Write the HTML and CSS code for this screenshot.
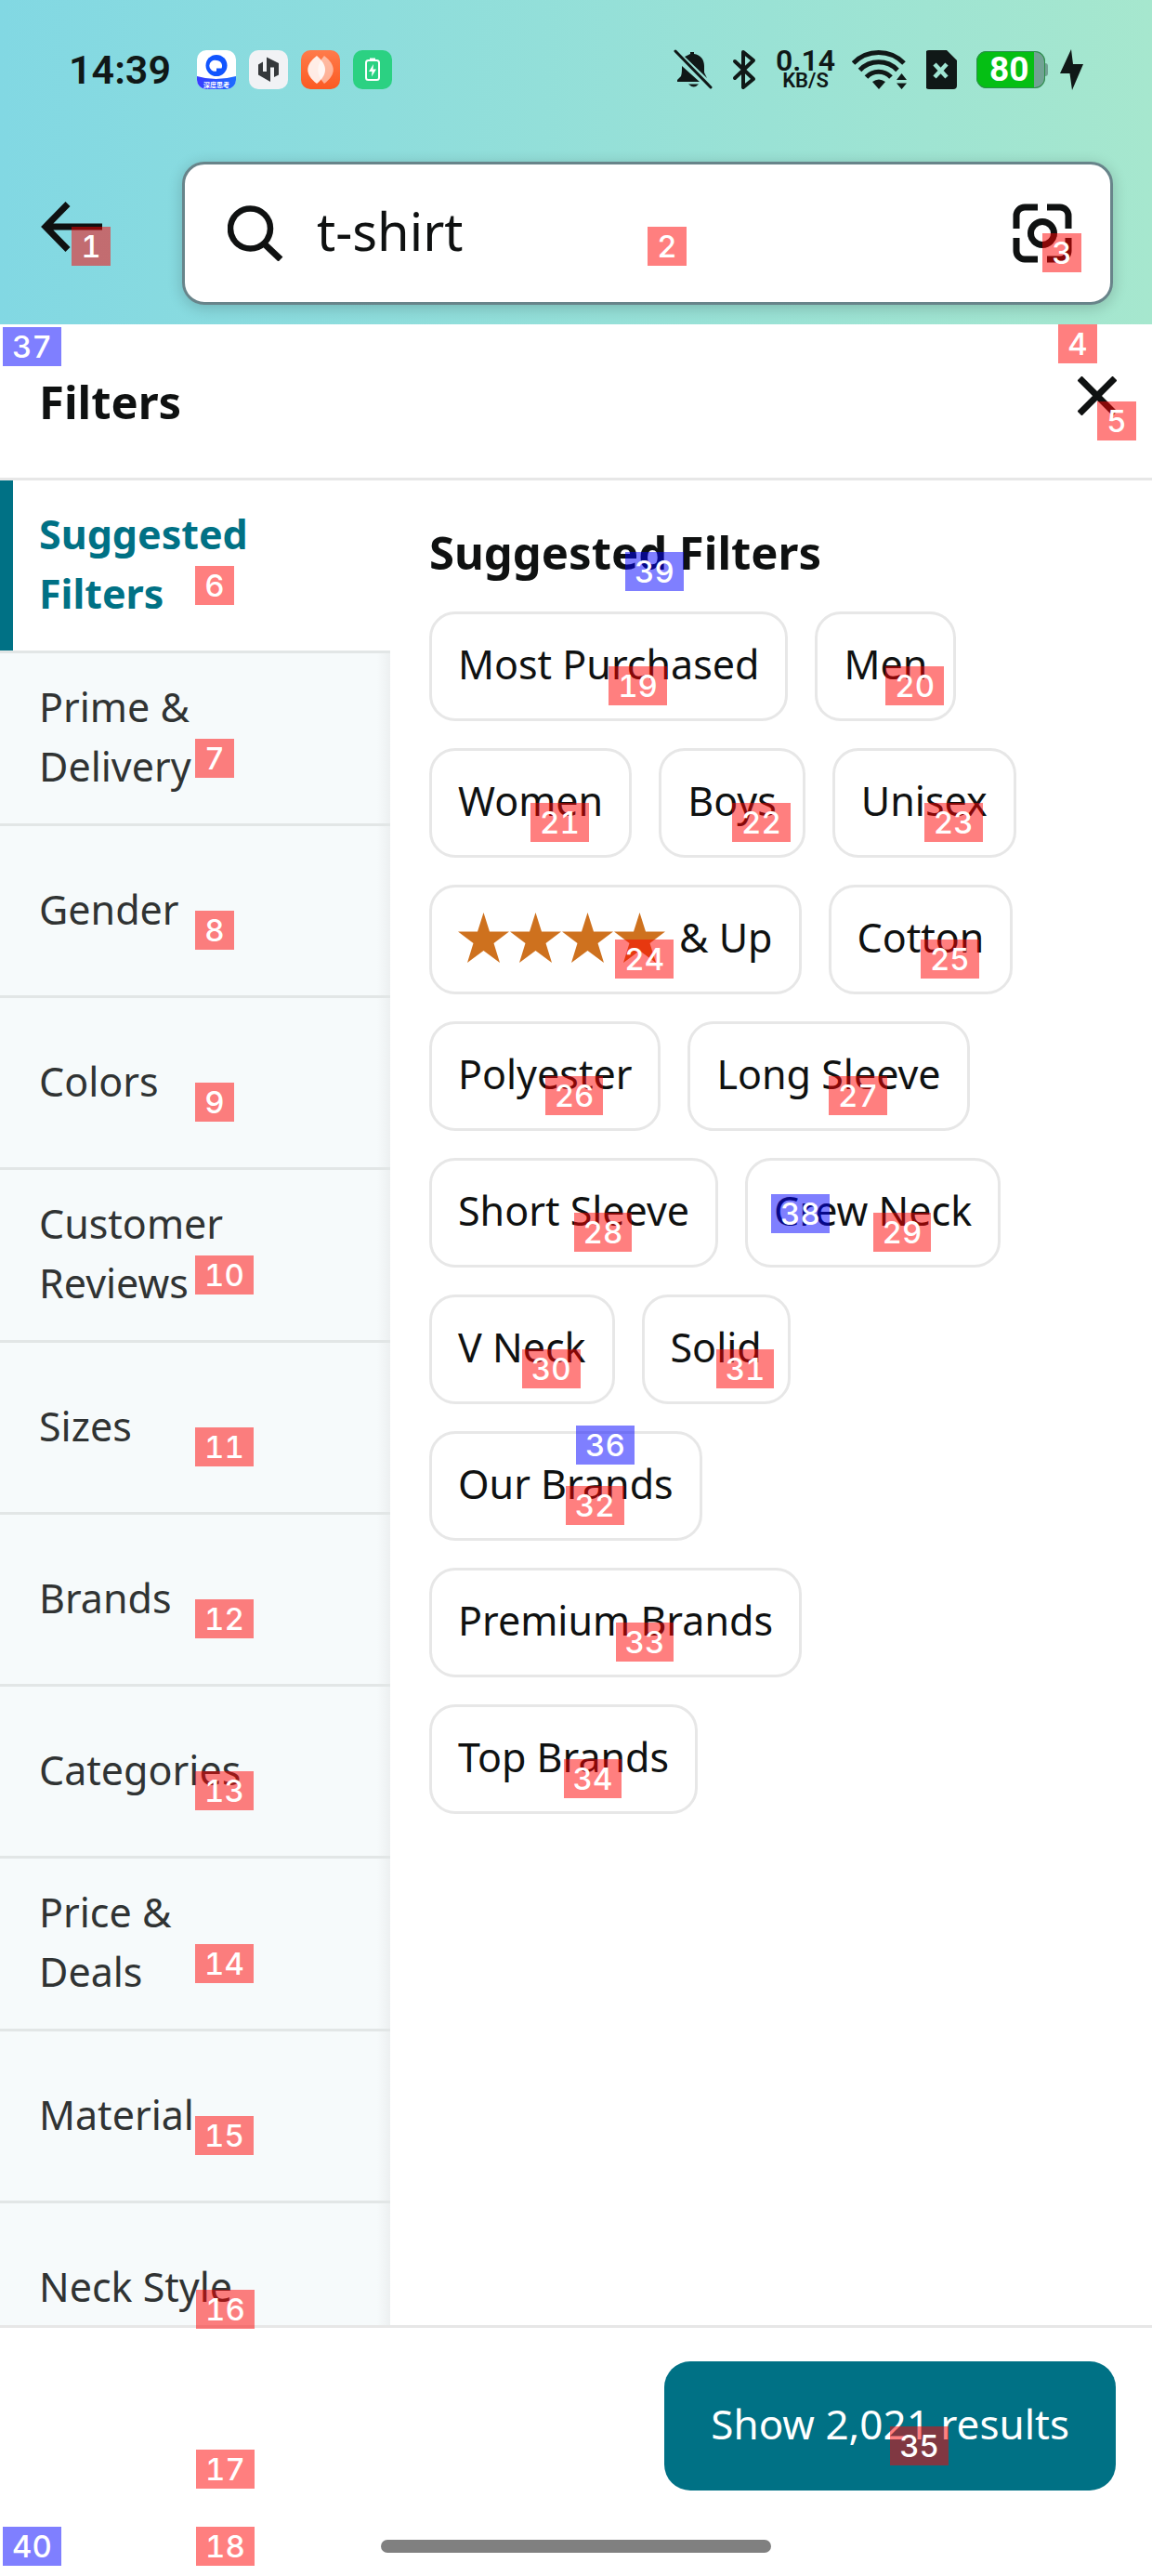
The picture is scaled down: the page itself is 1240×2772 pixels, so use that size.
FILE: index.html
```html
<!DOCTYPE html>
<html lang="en">
<head>
<meta charset="utf-8">
<meta name="viewport" content="width=device-width, initial-scale=1">
<title>Filters</title>
<link rel="stylesheet" href="styles.css">
</head>
<body>
<div class="app">
  <header class="top">
    <div class="status">
      <div class="status-left">
        <span class="time">14:39</span>
        <svg class="app-icon" viewBox="0 0 42 42" aria-hidden="true">
          <defs>
            <linearGradient id="band" x1="0" x2="1"><stop offset="0" stop-color="#3a3cff"/><stop offset="1" stop-color="#1d6dff"/></linearGradient>
            <clipPath id="tile"><rect width="42" height="42" rx="10"/></clipPath>
          </defs>
          <g clip-path="url(#tile)">
            <rect width="42" height="42" fill="#fff"/>
            <path d="M0 28Q20 34 42 28V42H0Z" fill="url(#band)"/>
            <circle cx="21" cy="16.500" r="11.500" fill="#1155ff"/>
            <path d="M21 11a6 6 0 1 0 0 11.500V19.500h5.500A6 6 0 0 0 21 11Z" fill="#fff"/>
            <text class="tile-text" x="21" y="40" text-anchor="middle">深度思考</text>
          </g>
        </svg>
        <svg class="app-icon" viewBox="0 0 42 42" aria-hidden="true">
          <rect width="42" height="42" rx="10" fill="#f1f2f5"/>
          <path d="M10 15.500 15 12.500V23h4V18.500h4V34L10 26.500Z" fill="#35383b"/>
          <path d="M19 7.500 32 14V26.500l-5 2.500V18.500h-4V22.500h-4Z" fill="#35383b"/>
        </svg>
        <svg class="app-icon" viewBox="0 0 42 42" aria-hidden="true">
          <defs><linearGradient id="orange" x2="0" y2="1"><stop offset="0" stop-color="#ff7b4b"/><stop offset="1" stop-color="#fb5a22"/></linearGradient></defs>
          <rect width="42" height="42" rx="10" fill="url(#orange)"/>
          <path d="M25 6C38 16 38 26 25 36C16 26 16 16 25 6Z" fill="#fff" opacity=".5"/>
          <path d="M17 6C4 16 4 26 17 36C29 26 29 16 17 6Z" fill="#fff" opacity=".88"/>
        </svg>
        <svg class="app-icon" viewBox="0 0 42 42" aria-hidden="true">
          <rect width="42" height="42" rx="10" fill="#2bd182"/>
          <rect x="14" y="11" width="14" height="21" rx="2.500" fill="none" stroke="#fff" stroke-width="2"/>
          <path d="M18 8.500h6V11h-6Z" fill="#fff"/>
          <path d="M22 15 17 23h3.500L20 28.500l5-8h-3.500Z" fill="#fff"/>
        </svg>
      </div>
      <div class="status-right">
        <svg width="42" height="44" viewBox="0 0 42 44" aria-hidden="true">
          <path d="M9 18 28 35H4v-2l4-4c1-3 1-7 1-11ZM12 8l6-3V3h4v2c7 1 11 6 11 13v7l3 6Z" fill="#101817"/>
          <path d="M2 2 40 41" stroke="#101817" stroke-width="3" stroke-linecap="round"/>
          <path d="M16 37.500h11q-5 6-11 0Z" fill="#101817"/>
        </svg>
        <svg width="30" height="44" viewBox="0 0 30 44" aria-hidden="true">
          <path d="M4 13 24 32 13 41V3L24 12 4 31" fill="none" stroke="#101817" stroke-width="4" stroke-linejoin="round" stroke-linecap="round"/>
        </svg>
        <span class="net"><span class="net-rate">0.14</span><span class="net-unit">KB/S</span></span>
        <svg width="60" height="44" viewBox="0 0 60 44" aria-hidden="true">
          <g fill="none" stroke="#101817" stroke-width="5">
            <path d="M1.500 15A38 38 0 0 1 56 15"/>
            <path d="M8.500 22.500A28 28 0 0 1 49 22.500"/>
            <path d="M15.500 30A18 18 0 0 1 42 30"/>
          </g>
          <path d="M22 35q7-5 14 0l-7 8Z" fill="#101817"/>
          <path d="M48 33l5.500-7 5.500 7ZM48 36.500h11L53.500 43Z" fill="#101817"/>
        </svg>
        <svg width="34" height="44" viewBox="0 0 34 44" aria-hidden="true">
          <path d="M3 1H22L33 12V39a4 4 0 0 1-4 4H3a4 4 0 0 1-4-4V5a4 4 0 0 1 4-4Z" fill="#101817"/>
          <path d="m9 16 13 14M22 16 9 30" stroke="#a0e5d3" stroke-width="4.500"/>
        </svg>
        <span class="power">
          <span class="battery"><span class="battery-level">80</span></span>
          <svg width="25" height="44" viewBox="0 0 25 44" aria-hidden="true">
            <path d="M12 0 0 26H10.500L13 44 25 16H14Z" fill="#101817"/>
          </svg>
        </span>
      </div>
    </div>
    <div class="search-row">
      <button class="back" type="button" aria-label="Back">
        <svg width="66" height="54" viewBox="0 0 66 54" aria-hidden="true"><path d="M66 27H5M29 2.500 5 27 29 51.500" fill="none" stroke="#0f1111" stroke-width="7"/></svg>
        <span class="mark">1</span>
      </button>
      <div class="search">
        <label class="search-label" for="q" aria-label="Search">
          <svg width="60" height="60" viewBox="0 0 60 60" aria-hidden="true"><circle cx="24.500" cy="25" r="21.500" fill="none" stroke="#0f1111" stroke-width="6.500"/><path d="M39 41 57 58" stroke="#0f1111" stroke-width="7"/></svg>
        </label>
        <input class="search-input" id="q" type="text" value="t-shirt">
        <button class="camera" type="button" aria-label="Search by image">
          <svg width="64" height="64" viewBox="0 0 64 64" aria-hidden="true">
            <g fill="none" stroke="#0f1111" stroke-width="7">
              <path d="M4 27V13a9 9 0 0 1 9-9H27M37 4H51a9 9 0 0 1 9 9V27M60 37V51a9 9 0 0 1-9 9H37M27 60H13a9 9 0 0 1-9-9V37"/>
              <circle cx="32" cy="32" r="12.500"/>
            </g>
          </svg>
          <span class="mark">3</span>
        </button>
        <span class="mark mark-field">2</span>
      </div>
    </div>
  </header>

  <main class="sheet">
    <span class="mark mark-blue mark-corner">37</span>
    <span class="mark mark-blue">36</span>
    <div class="sheet-head">
      <h1 class="title">Filters</h1>
      <button class="close" type="button" aria-label="Close">
        <svg width="42" height="42" viewBox="0 0 42 42" aria-hidden="true"><path d="M2 2 40 40M40 2 2 40" stroke="#0f1111" stroke-width="7"/></svg>
        <span class="mark mark-start">4</span>
        <span class="mark">5</span>
      </button>
    </div>

    <div class="columns">
      <nav class="groups" aria-label="Filter groups">
        <button class="group group-on" type="button">Suggested Filters<span class="mark">6</span></button>
        <button class="group" type="button">Prime &amp; Delivery<span class="mark">7</span></button>
        <button class="group" type="button">Gender<span class="mark">8</span></button>
        <button class="group" type="button">Colors<span class="mark">9</span></button>
        <button class="group" type="button">Customer Reviews<span class="mark">10</span></button>
        <button class="group" type="button">Sizes<span class="mark">11</span></button>
        <button class="group" type="button">Brands<span class="mark">12</span></button>
        <button class="group" type="button">Categories<span class="mark">13</span></button>
        <button class="group" type="button">Price &amp; Deals<span class="mark">14</span></button>
        <button class="group" type="button">Material<span class="mark">15</span></button>
        <button class="group" type="button">Neck Style</button>
      </nav>
      <section class="panel">
        <span class="mark mark-blue">38</span>
        <h2 class="subtitle">Suggested Filters<span class="mark mark-blue">39</span></h2>
        <div class="chips">
          <button class="chip" type="button">Most Purchased<span class="mark">19</span></button>
          <button class="chip" type="button">Men<span class="mark">20</span></button>
          <button class="chip" type="button">Women<span class="mark">21</span></button>
          <button class="chip" type="button">Boys<span class="mark">22</span></button>
          <button class="chip" type="button">Unisex<span class="mark">23</span></button>
          <button class="chip chip-stars" type="button" aria-label="4 stars and up">
            <svg width="224" height="54" viewBox="0 0 224 54" aria-hidden="true">
              <defs><path id="star" d="M27.500 0 34 20.500H55L38.500 33 45 54 27.500 41 10 54 16.500 33 0 20.500H21Z"/></defs>
              <g fill="#ce711e"><use href="#star"/><use href="#star" x="56"/><use href="#star" x="112"/><use href="#star" x="168"/></g>
            </svg>
            <span>&amp; Up</span>
            <span class="mark">24</span>
          </button>
          <button class="chip" type="button">Cotton<span class="mark">25</span></button>
          <button class="chip" type="button">Polyester<span class="mark">26</span></button>
          <button class="chip" type="button">Long Sleeve<span class="mark">27</span></button>
          <button class="chip" type="button">Short Sleeve<span class="mark">28</span></button>
          <button class="chip" type="button">Crew Neck<span class="mark">29</span></button>
          <button class="chip" type="button">V Neck<span class="mark">30</span></button>
          <button class="chip" type="button">Solid<span class="mark">31</span></button>
          <button class="chip" type="button">Our Brands<span class="mark">32</span></button>
          <button class="chip" type="button">Premium Brands<span class="mark">33</span></button>
          <button class="chip" type="button">Top Brands<span class="mark">34</span></button>
        </div>
      </section>
    </div>

    <div class="sheet-foot">
      <span class="mark mark-row16">16</span>
      <span class="mark mark-row17">17</span>
      <button class="show" type="button">Show 2,021 results<span class="mark">35</span></button>
    </div>
  </main>

  <footer class="home">
    <span class="mark mark-blue mark-home-corner">40</span>
    <span class="mark mark-home-row">18</span>
    <span class="home-bar"></span>
  </footer>
</div>
</body>
</html>
```
FILE: styles.css
```css
* {
  box-sizing: border-box;
}

body {
  margin: 0;
  background: #fff;
  color: #0f1111;
  font-family: "Noto Sans", "Open Sans", sans-serif;
  font-size: 43px;
  line-height: 64px;
}

button {
  margin: 0;
  padding: 0;
  border: 0;
  background: none;
  color: inherit;
  font: inherit;
  cursor: pointer;
}

svg {
  display: block;
  flex: none;
}

.app {
  display: flex;
  flex-direction: column;
  height: 100vh;
}

/* Numbered element tags, anchored at the centre of their owner */
.mark {
  position: absolute;
  top: 50%;
  left: 50%;
  min-width: 42px;
  height: 42px;
  padding: 0 10px;
  background: rgba(255, 0, 0, 0.5);
  color: #fff;
  font-family: Inter, sans-serif;
  font-size: 33px;
  font-weight: 500;
  font-variant-numeric: tabular-nums;
  line-height: 42px;
  text-align: center;
  z-index: 2;
}

.mark-blue {
  background: rgba(0, 0, 255, 0.5);
}

.mark-start {
  top: 0;
  left: 0;
}

.mark-field {
  top: 67px;
}

.mark-corner {
  top: 3px;
  left: 3px;
}

.mark-home-corner {
  top: 0;
  left: 3px;
}

.mark-row16,
.mark-row17,
.mark-home-row {
  top: 0;
  left: 211px;
}

.mark-row16 {
  top: -41px;
}

.mark-row17 {
  top: 131px;
}

/* Header */
.top {
  flex: none;
  background: linear-gradient(90deg, #82d8e3, #a6e7ce);
}

.status {
  display: flex;
  align-items: center;
  justify-content: space-between;
  height: 150px;
  padding: 0 74px;
  color: #101817;
  font-family: Roboto, sans-serif;
}

.status-left {
  display: flex;
  align-items: center;
  gap: 14px;
}

.status-right {
  display: flex;
  align-items: center;
  gap: 20px;
}

.time {
  width: 124px;
  font-size: 43px;
  font-weight: 600;
}

.app-icon {
  width: 42px;
  height: 42px;
}

.tile-text {
  fill: #fff;
  font-family: "Noto Sans CJK SC", sans-serif;
  font-size: 7px;
  font-weight: 700;
}

.net {
  display: flex;
  flex-direction: column;
  align-items: center;
  width: 60px;
  font-weight: 600;
}

.net-rate {
  font-size: 32px;
  line-height: 24px;
}

.net-unit {
  font-size: 22px;
  line-height: 20px;
}

.power {
  display: flex;
  align-items: center;
  gap: 13px;
}

.battery {
  position: relative;
  width: 74px;
  height: 40px;
  margin-right: 3px;
  border-radius: 11px;
  background: linear-gradient(90deg, #05bf14 62px, #71a294 62px);
  box-shadow: inset 0 0 0 1px #2b8f4a;
}

.battery::after {
  content: "";
  position: absolute;
  top: 13px;
  right: -3px;
  width: 3px;
  height: 14px;
  border-radius: 0 3px 3px 0;
  background: #71a294;
}

.battery-level {
  display: block;
  padding-left: 14px;
  color: #fff;
  font-size: 37px;
  font-weight: 700;
  line-height: 40px;
}

.search-row {
  display: flex;
  gap: 86px;
  padding: 24px 42px 21px 44px;
}

.back {
  position: relative;
  display: flex;
  flex: none;
  align-items: center;
  width: 66px;
  height: 140px;
}

.search {
  position: relative;
  display: flex;
  flex: 1;
  align-items: center;
  gap: 36px;
  min-width: 0;
  height: 154px;
  padding: 0 41px 0 46px;
  border: 3px solid #68848a;
  border-radius: 24px;
  background: #fff;
  box-shadow: 0 3px 16px rgba(15, 17, 17, 0.2);
}

.search-input {
  flex: 1;
  width: 100%;
  min-width: 0;
  height: 148px;
  padding: 0 0 6px;
  border: 0;
  outline: 0;
  background: none;
  color: #0f1111;
  font: inherit;
  font-size: 56px;
}

.camera {
  position: relative;
}

/* Sheet */
.sheet {
  position: relative;
  display: flex;
  flex: 1;
  flex-direction: column;
  min-height: 0;
}

.sheet-head {
  display: flex;
  flex: none;
  align-items: center;
  justify-content: space-between;
  padding: 0 17px 0 42px;
  border-bottom: 3px solid #e7e7e7;
}

.title,
.subtitle {
  margin: 0;
  font-size: 49px;
  font-weight: 700;
  line-height: 64px;
}

.close {
  position: relative;
  display: flex;
  align-items: center;
  justify-content: center;
  width: 84px;
  height: 165px;
  padding-bottom: 12px;
}

.columns {
  display: flex;
  flex: 1;
  min-height: 0;
}

.groups {
  display: flex;
  flex: none;
  flex-direction: column;
  width: 420px;
  overflow: hidden;
}

.group {
  position: relative;
  display: flex;
  flex: none;
  align-items: center;
  min-height: 185px;
  padding: 26px 140px 29px 42px;
  border-bottom: 3px solid #e2e6e6;
  background: linear-gradient(270deg, #edf0f1, #f6fafb 14px);
  color: #303333;
  text-align: left;
}

.group-on {
  background: #fff;
  box-shadow: inset 14px 0 #007185;
  color: #007185;
  font-weight: 700;
}

.panel {
  position: relative;
  flex: 1;
  align-self: flex-start;
  min-width: 0;
  padding: 45px 71px 100px 42px;
}

.subtitle {
  position: relative;
  width: fit-content;
  margin-bottom: 32px;
}

.chips {
  display: flex;
  flex-wrap: wrap;
  gap: 29px;
}

.chip {
  position: relative;
  padding: 24px 28px 28px;
  border: 3px solid #e7e7e7;
  border-radius: 28px;
  background: #fff;
  line-height: 60px;
}

.chip-stars {
  display: flex;
  align-items: center;
  gap: 14px;
}

.sheet-foot {
  position: relative;
  display: flex;
  flex: none;
  justify-content: flex-end;
  padding: 36px 39px 39px;
  border-top: 3px solid #e7e7e7;
}

.show {
  position: relative;
  padding: 35px 50px 40px;
  border-radius: 28px;
  background: #007185;
  color: #fff;
  font-size: 44px;
}

.home {
  position: relative;
  display: flex;
  flex: none;
  justify-content: center;
  height: 53px;
  padding-top: 14px;
}

.home-bar {
  width: 420px;
  height: 14px;
  border-radius: 7px;
  background: #808080;
}
```
